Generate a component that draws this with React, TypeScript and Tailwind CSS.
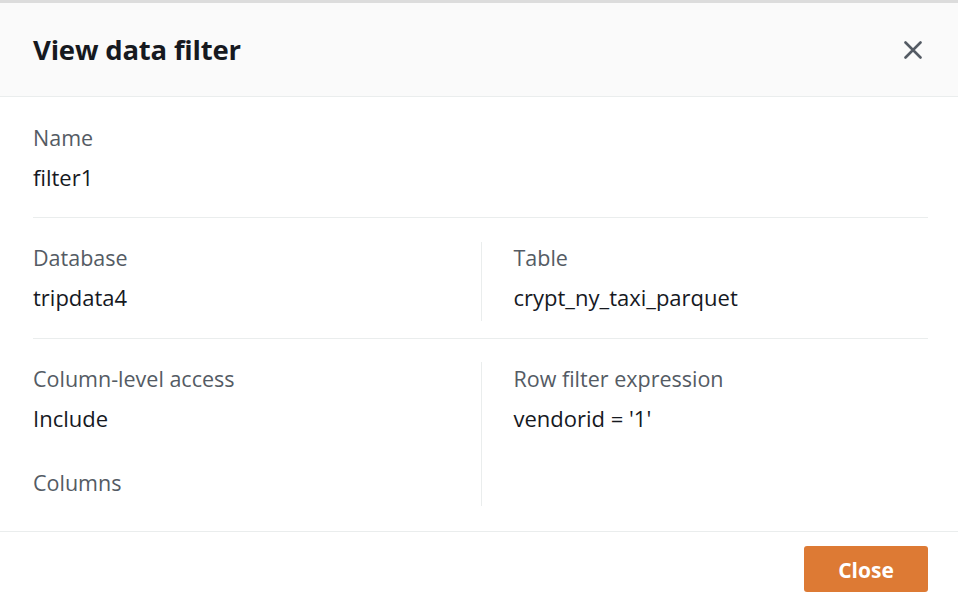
const Field = ({ label, value }: { label: string; value?: string }) => (
  <div>
    <p className="text-[21.5px] leading-[30px] text-[#545b64]">{label}</p>
    {value && <p className="mt-[9px] text-[22px] leading-[30px] text-[#16191f]">{value}</p>}
  </div>
);

export default function App() {
  return (
    <div
      className="w-[958px] h-[604px] overflow-hidden bg-white flex flex-col"
      style={{ fontFamily: '"Open Sans", "Noto Sans", Arial, sans-serif' }}
    >
      <div className="h-[3px] bg-[#dcdcdc]" />
      {/* Header */}
      <div className="h-[94px] shrink-0 flex items-center justify-between pl-[33px] pr-[36px] bg-[#fafafa] border-b border-[#eaeded]">
        <h2 className="text-[27.5px] font-bold text-[#16191f] tracking-[-0.2px]">View data filter</h2>
        <button className="text-[#545b64]">
          <svg width="18" height="18" viewBox="0 0 18 18" fill="none" stroke="currentColor" strokeWidth="2.6" strokeLinecap="round">
            <path d="M1.5 1.5l15 15M16.5 1.5l-15 15" />
          </svg>
        </button>
      </div>

      {/* Body */}
      <div className="flex-1 px-[33px] pr-[30px] pb-[9px]">
        <div className="pt-[26px] pb-[25px] border-b border-[#eaeded]">
          <Field label="Name" value="filter1" />
        </div>
        <div className="grid grid-cols-2 pt-[24px] pb-[17px] border-b border-[#eaeded]">
          <div className="pb-[9px] pt-px">
            <Field label="Database" value="tripdata4" />
          </div>
          <div className="pb-[9px] pt-px pl-8 border-l border-[#eaeded]">
            <Field label="Table" value="crypt_ny_taxi_parquet" />
          </div>
        </div>
        <div className="grid grid-cols-2 pt-[23px] pb-[16px]">
          <div className="pb-[8px] pt-[2px]">
            <Field label="Column-level access" value="Include" />
            <div className="mt-[35px]">
              <Field label="Columns" />
            </div>
          </div>
          <div className="pb-[8px] pt-[2px] pl-8 border-l border-[#eaeded]">
            <Field label="Row filter expression" value="vendorid = '1'" />
          </div>
        </div>
      </div>

      {/* Footer */}
      <div className="h-[73px] shrink-0 border-t border-[#eaeded] flex justify-end items-start pt-[14px] pr-[30px]">
        <button className="w-[124px] h-[46px] pt-[3px] rounded-[3px] bg-[#dd7a34] text-white text-[21px] font-bold">
          Close
        </button>
      </div>
    </div>
  );
}
